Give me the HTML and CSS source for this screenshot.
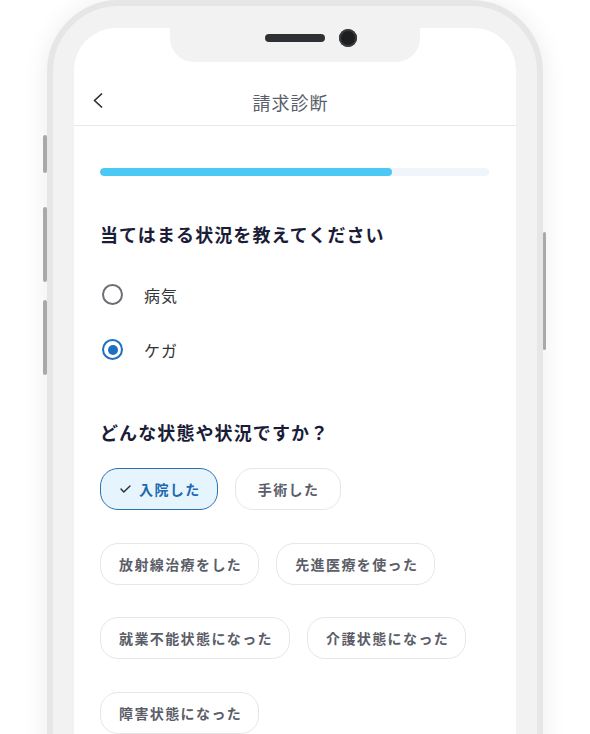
FILE: index.html
```html
<!DOCTYPE html>
<html lang="ja">
<head>
<meta charset="utf-8">
<title>請求診断</title>
<link rel="stylesheet" href="styles.css">
</head>
<body>
<div class="stage">
  <div class="phone">
    <span class="side side-l1"></span>
    <span class="side side-l2"></span>
    <span class="side side-l3"></span>
    <span class="side side-r1"></span>
    <div class="screen">
      <div class="notch"><span class="speaker"></span><span class="camera"></span></div>
      <header class="appbar">
        <svg class="back" width="10" height="15" viewBox="0 0 10 15"><polyline points="8.5,1 1.5,7.5 8.5,14" fill="none" stroke="#2b2d33" stroke-width="1.7" stroke-linecap="round" stroke-linejoin="round"/></svg>
        <h1 class="title">請求診断</h1>
        <span></span>
      </header>
      <main class="content">
        <div class="progress"><div class="progress-fill" style="width:75%"></div></div>
        <h2 class="q q-first">当てはまる状況を教えてください</h2>
        <div class="radios">
          <div class="radio"><span class="circle"></span><span class="rlabel">病気</span></div>
          <div class="radio"><span class="circle on"></span><span class="rlabel">ケガ</span></div>
        </div>
        <h2 class="q q-second">どんな状態や状況ですか？</h2>
        <div class="chips">
          <span class="chip chip-on"><svg class="check" width="11" height="8" viewBox="0 0 11 8"><polyline points="1,4 3.8,7 10,1" fill="none" stroke="#2b2d33" stroke-width="1.4" stroke-linecap="round" stroke-linejoin="round"/></svg>入院した</span>
          <span class="chip">手術した</span>
          <span class="chip">放射線治療をした</span>
          <span class="chip">先進医療を使った</span>
          <span class="chip">就業不能状態になった</span>
          <span class="chip">介護状態になった</span>
          <span class="chip">障害状態になった</span>
        </div>
      </main>
    </div>
  </div>
</div>
</body>
</html>
```

FILE: styles.css
```css
* { box-sizing: border-box; }
html, body { margin: 0; padding: 0; }
body {
  background: #ffffff;
  overflow: hidden;
  font-family: "Noto Sans CJK JP", "Noto Sans", sans-serif;
  width: 590px;
  height: 734px;
}
.stage {
  padding: 0 0 0 47px;
}
.phone {
  position: relative;
  width: 496px;
  height: 920px;
  border: 6px solid #e6e6e6;
  background: #f2f2f2;
  border-radius: 72px;
  padding: 22px 21px 0;
  box-shadow: 0 2px 26px rgba(0, 0, 0, 0.08);
}
.side {
  position: absolute;
  width: 4px;
  background: #a9a9a9;
  border-radius: 2px;
}
.side-l1 { left: -10px; top: 129px; height: 38px; }
.side-l2 { left: -10px; top: 201px; height: 75px; }
.side-l3 { left: -10px; top: 294px; height: 75px; }
.side-r1 { right: -9px; top: 226px; height: 118px; width: 3px; }

.screen {
  position: relative;
  background: #ffffff;
  border-radius: 42px 42px 0 0;
  height: 900px;
  overflow: hidden;
}
.notch {
  position: absolute;
  top: 0;
  left: 96px;
  width: 250px;
  height: 34px;
  background: #f2f2f2;
  border-radius: 0 0 24px 24px;
}
.speaker {
  position: absolute;
  left: 95px;
  top: 6px;
  width: 60px;
  height: 8px;
  border-radius: 4px;
  background: #2f3033;
}
.camera {
  position: absolute;
  left: 169px;
  top: 1px;
  width: 18px;
  height: 18px;
  border-radius: 50%;
  background: #1d1e20;
  box-shadow: inset 0 0 0 2px #3a3b3e;
}

.appbar {
  height: 98px;
  border-bottom: 1px solid #e8e8eb;
  display: grid;
  grid-template-columns: 1fr auto 1fr;
  align-items: end;
  padding: 0 0 11px;
}
.back {
  margin: 0 0 6px 19px;
  display: block;
}
.title {
  margin: 0 9px 0 0;
  font-size: 18px;
  line-height: 24px;
  font-weight: 400;
  color: #5a5e6a;
  letter-spacing: 1px;
}

.content {
  padding: 42px 27px 0 26px;
}
.progress {
  height: 8px;
  border-radius: 4px;
  background: #f0f5fc;
  overflow: hidden;
}
.progress-fill {
  height: 100%;
  border-radius: 4px;
  background: #4bc8f3;
}
.q {
  margin: 0;
  font-size: 18px;
  line-height: 26px;
  font-weight: 700;
  color: #1b1d38;
  letter-spacing: 1.1px;
}
.q-first { margin-top: 45px; }
.q-second { margin-top: 42px; }

.radios {
  margin-top: 20px;
  display: flex;
  flex-direction: column;
}
.radio {
  height: 55px;
  display: flex;
  align-items: center;
  gap: 21px;
  padding-left: 2px;
}
.circle {
  width: 21px;
  height: 21px;
  border-radius: 50%;
  border: 2px solid #6d6e75;
  display: flex;
  align-items: center;
  justify-content: center;
}
.circle.on {
  border-color: #1f6fc1;
}
.circle.on::after {
  content: "";
  width: 10px;
  height: 10px;
  border-radius: 50%;
  background: #1f6fc1;
}
.rlabel {
  font-size: 16px;
  color: #333438;
  letter-spacing: 1px;
}

.chips {
  margin-top: 23px;
  display: flex;
  flex-wrap: wrap;
  column-gap: 17px;
  row-gap: 32.5px;
  width: 380px;
}
.chip {
  height: 42px;
  min-width: 106px;
  padding: 0 16px 0 18px;
  border: 1px solid #e5e6ea;
  border-radius: 18px;
  display: inline-flex;
  align-items: center;
  justify-content: center;
  font-size: 14px;
  font-weight: 700;
  letter-spacing: 1.4px;
  color: #5b5e69;
  background: #ffffff;
}
.chip-on {
  background: #e6f4fd;
  border-color: #2f6fae;
  color: #2068b0;
  padding: 0 16px 0 19px;
  gap: 8px;
}
.check { display: block; }
```
